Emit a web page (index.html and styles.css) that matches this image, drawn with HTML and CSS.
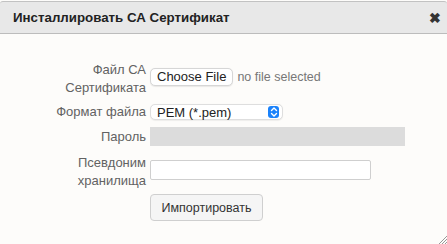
FILE: index.html
```html
<!DOCTYPE html>
<html>
<head>
<meta charset="utf-8">
<link rel="stylesheet" href="styles.css">
</head>
<body>
<div class="dialog">
  <div class="titlebar">
    <span class="title">Инсталлировать СА Сертификат</span>
    <span class="close">✖</span>
  </div>
  <div class="content">
    <div class="row row-file">
      <label class="lbl">Файл СА<br>Сертификата</label>
      <div class="ctrl">
        <button class="choose">Choose File</button>
        <span class="nofile">no file selected</span>
      </div>
    </div>
    <div class="row row-format">
      <label class="lbl">Формат файла</label>
      <div class="ctrl">
        <div class="select">
          <span class="select-text">PEM (*.pem)</span>
          <span class="stepper">
            <svg width="10" height="12" viewBox="0 0 10 12"><path d="M2.5 4.5 L5 2 L7.5 4.5 M2.5 7.5 L5 10 L7.5 7.5" fill="none" stroke="#fff" stroke-width="1.4" stroke-linecap="round" stroke-linejoin="round"/></svg>
          </span>
        </div>
      </div>
    </div>
    <div class="row row-pass">
      <label class="lbl">Пароль</label>
      <div class="ctrl"><div class="input disabled"></div></div>
    </div>
    <div class="row row-alias">
      <label class="lbl">Псевдоним<br>хранилища</label>
      <div class="ctrl"><div class="input alias"></div></div>
    </div>
    <div class="row row-btn">
      <div class="lbl"></div>
      <div class="ctrl"><button class="import">Импортировать</button></div>
    </div>
  </div>
  <div class="resize">
    <svg width="9" height="9" viewBox="0 0 9 9"><path d="M9 1 L1 9 M9 4 L4 9 M9 7 L7 9" stroke="#999" stroke-width="1"/></svg>
  </div>
</div>
</body>
</html>
```
FILE: styles.css
```css
html, body {
  margin: 0;
  padding: 0;
  background: #fdfcfa;
  font-family: "Liberation Sans", Arial, sans-serif;
}
.dialog {
  position: relative;
  width: 447px;
  height: 244px;
  overflow: hidden;
  background: #fdfcfa;
}
.titlebar {
  margin-top: 1px;
  height: 31px;
  background: #e8e8e8;
  border-top: 1px solid #c2c2c2;
  border-bottom: 1px solid #bcbcbc;
  border-radius: 3px 3px 0 0;
  display: flex;
  align-items: center;
  justify-content: space-between;
  padding: 0 6px 0 13px;
}
.title {
  font-weight: bold;
  font-size: 13.3px;
  color: #222;
}
.close {
  font-size: 14px;
  color: #333;
  font-weight: bold;
}
.content {
  padding-top: 27px;
}
.row {
  display: flex;
  align-items: center;
}
.lbl {
  width: 146px;
  flex: none;
  text-align: right;
  font-size: 13px;
  line-height: 18px;
  color: #626262;
}
.ctrl {
  margin-left: 4px;
  display: flex;
  align-items: center;
}
.row-file { height: 36px; }
.row-format { height: 18px; margin-top: 6px; }
.row-pass { height: 19px; margin-top: 6px; }
.row-alias { height: 36px; margin-top: 8px; }
.row-btn { height: 27px; margin-top: 4px; }

.choose {
  font-family: "Liberation Sans", Arial, sans-serif;
  font-size: 13px;
  height: 18px;
  padding: 0 6px;
  background: #fff;
  border: 1px solid #d6d6d6;
  border-radius: 5px;
  color: #222;
  box-shadow: 0 0.5px 1px rgba(0,0,0,0.08);
  line-height: 16px;
  margin-top: -4px;
}
.nofile {
  font-size: 12.5px;
  color: #777;
  margin-left: 4px;
  margin-top: -4px;
}
.select {
  width: 133px;
  height: 16px;
  box-sizing: border-box;
  background: #fff;
  border: 1px solid #dedede;
  border-radius: 5px;
  display: flex;
  align-items: center;
  justify-content: space-between;
  padding: 0 3px 0 6px;
  box-shadow: 0 0.5px 1px rgba(0,0,0,0.06);
}
.select-text {
  font-size: 13px;
  color: #222;
}
.stepper {
  width: 11px;
  height: 12px;
  background: #1a82fb;
  border-radius: 3px;
  display: flex;
  align-items: center;
  justify-content: center;
}
.input {
  box-sizing: border-box;
  height: 20px;
  border: 1px solid #cfcfcf;
  border-radius: 2px;
}
.input.disabled {
  width: 255px;
  height: 19px;
  background: #dcdcdc;
  border-color: #dcdcdc;
  border-radius: 0;
}
.input.alias {
  width: 221px;
  background: #fff;
  margin-top: -4px;
}
.import {
  font-family: "Liberation Sans", Arial, sans-serif;
  font-size: 12.5px;
  color: #333;
  height: 27px;
  width: 113px;
  background: #f5f5f5;
  border: 1px solid #cfcfcf;
  border-radius: 4px;
  padding: 0;
}
.resize {
  position: absolute;
  right: 0;
  bottom: 0;
  width: 9px;
  height: 9px;
  line-height: 0;
}
```
